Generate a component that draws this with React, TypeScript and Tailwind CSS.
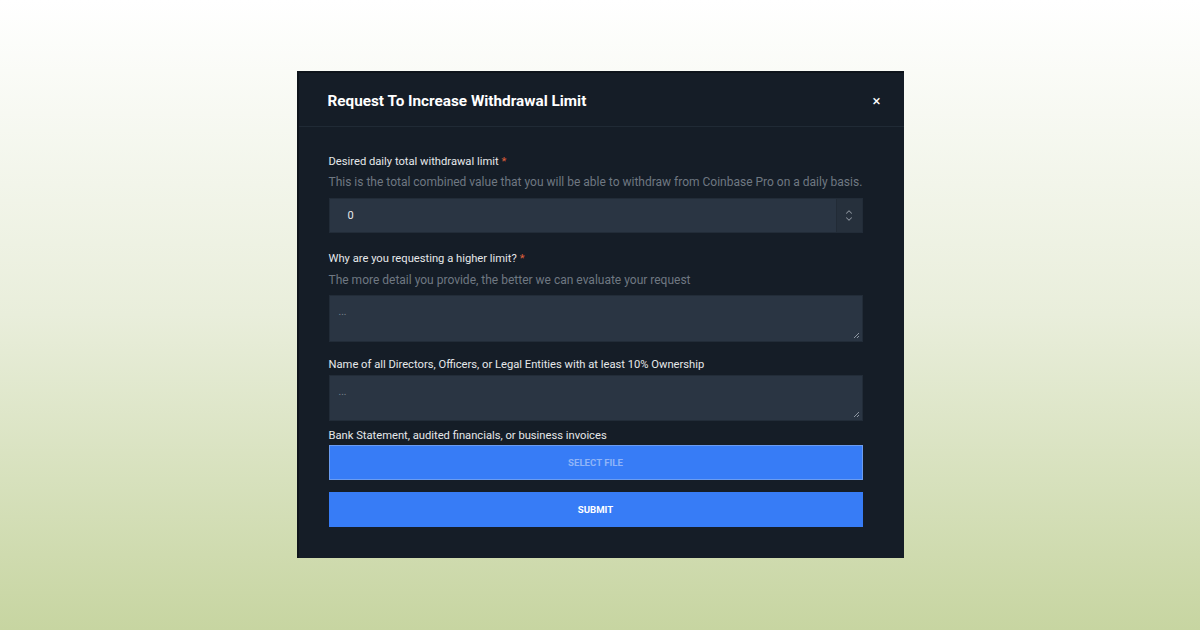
import { ChevronUp, ChevronDown } from 'lucide-react'

function Label({ text, required = false }: { text: string; required?: boolean }) {
  return (
    <div className="text-[11.2px] leading-[14px] text-[#e6e8ea]">
      {text}
      {required && <span className="ml-[3px] text-[#e0603c]">*</span>}
    </div>
  )
}

function Hint({ text, gap = 'mt-[6px]' }: { text: string; gap?: string }) {
  return <div className={`${gap} text-[12px] leading-[15px] text-[#6f7882]`}>{text}</div>
}

function Area({ height }: { height: string }) {
  return (
    <div className={`relative w-full bg-[#2a3543] border border-[#222c38] ${height}`}>
      <span className="absolute left-[9px] top-[8px] text-[10px] text-[#7c8591]">...</span>
      <svg className="absolute right-[2px] bottom-[2px]" width="7" height="7" viewBox="0 0 7 7">
        <path d="M6 1 L1 6 M6 4 L4 6" stroke="#9aa3ad" strokeWidth="0.9" />
      </svg>
    </div>
  )
}

export default function App() {
  return (
    <div
      className="w-[1200px] h-[630px] bg-gradient-to-b from-[#ffffff] via-[#e9eedb] to-[#c7d5a1] flex justify-center pt-[71px]"
      style={{ fontFamily: 'Roboto, "Liberation Sans", sans-serif' }}
    >
      <div className="w-[607px] h-[487px] bg-[#151d27] border-l-2 border-t-2 border-[#0e141b] flex flex-col">
        <div className="h-[54px] pt-[4px] flex items-center justify-between pl-[29px] pr-[23px] border-b border-[#202a35]">
          <div className="text-[15.3px] font-bold text-white">Request To Increase Withdrawal Limit</div>
          <div className="text-[15px] text-white leading-none">×</div>
        </div>
        <div className="flex flex-col pl-[30px] pr-[41px] pt-[28px]">
          <Label text="Desired daily total withdrawal limit" required />
          <Hint text="This is the total combined value that you will be able to withdraw from Coinbase Pro on a daily basis." />
          <div className="mt-[8px] h-[35px] flex bg-[#2a3543] border border-[#222c38]">
            <div className="flex-1 flex items-center pl-[18px] pt-[1px] text-[11px] text-[#e6e8ea]">0</div>
            <div className="w-[26px] flex flex-col items-center justify-center bg-[#26303c] border-l border-[#222b36] text-[#8c949e]">
              <ChevronUp size={10} strokeWidth={2.5} />
              <ChevronDown size={10} strokeWidth={2.5} className="-mt-[3px]" />
            </div>
          </div>
          <div className="mt-[19px]">
            <Label text="Why are you requesting a higher limit?" required />
          </div>
          <Hint text="The more detail you provide, the better we can evaluate your request" gap="mt-[7px]" />
          <div className="mt-[7px]">
            <Area height="h-[47px]" />
          </div>
          <div className="mt-[16px]">
            <Label text="Name of all Directors, Officers, or Legal Entities with at least 10% Ownership" />
          </div>
          <div className="mt-[3px]">
            <Area height="h-[46px]" />
          </div>
          <div className="mt-[8px]">
            <Label text="Bank Statement, audited financials, or business invoices" />
          </div>
          <div className="mt-[2px] h-[35px] pt-[1px] bg-[#377cf6] border border-[#6b9cf0] flex items-center justify-center text-[9.6px] font-bold text-[#8fb4f8] uppercase">
            Select File
          </div>
          <div className="mt-[12px] h-[35px] pt-[1px] bg-[#377cf6] flex items-center justify-center text-[9.6px] font-bold text-white uppercase">
            Submit
          </div>
        </div>
      </div>
    </div>
  )
}
